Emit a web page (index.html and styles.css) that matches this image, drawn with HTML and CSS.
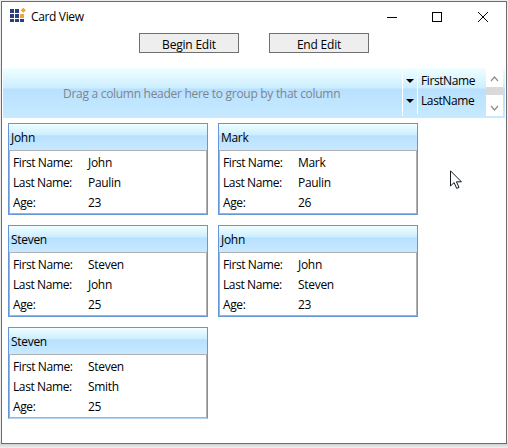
FILE: index.html
```
<!DOCTYPE html>
<html lang="en">
<head>
<meta charset="utf-8">
<title>Card View</title>
<link rel="stylesheet" href="styles.css">
</head>
<body>
<div class="window">
  <header class="titlebar">
    <svg class="logo" width="17" height="15" viewBox="0 0 17 15">
      <g fill="#293f7d"><path d="M0 1h4v4H0zM5 1h4v4H5zM0 6h4v4H0zM5 6h4v4H5zM0 11h4v3H0zM5 11h4v3H5zM10 11h4v3h-4z"/></g>
      <path fill="#f7a03c" d="M10 6h4v4h-4zM13.300 -.3l2.700 2.500-2.700 2.600-2.600-2.600z"/>
    </svg>
    <span class="title">Card View</span>
    <svg class="controls" width="104" height="12" viewBox="0 0 104 12" fill="none" stroke="#000">
      <path d="M0 6.500h10M45.500 1.500h9v9h-9z" shape-rendering="crispEdges"/>
      <path d="M91 1l10 10M101 1l-10 10"/>
    </svg>
  </header>
  <div class="toolbar">
    <button class="btn">Begin Edit</button>
    <button class="btn">End Edit</button>
  </div>
  <section class="groupbar">
    <div class="hint">Drag a column header here to group by that column</div>
    <div class="fields">
      <div class="field"><i class="drop"><b></b></i><span>FirstName</span></div>
      <div class="field"><i class="drop"><b></b></i><span>LastName</span></div>
    </div>
    <div class="scroll">
      <svg width="17" height="48" viewBox="0 0 17 48">
        <path fill="#d9d9d9" d="M0 19h17v8H0z"/>
        <path fill="none" stroke="#8c8c8c" stroke-width="1.200" d="M5 13l3.500-4 3.500 4M5 38l3.500 4 3.500-4"/>
      </svg>
    </div>
  </section>
  <main class="cards">
    <article class="card"><h2>John</h2><dl><dt>First Name:</dt><dd>John</dd><dt>Last Name:</dt><dd>Paulin</dd><dt>Age:</dt><dd>23</dd></dl></article>
    <article class="card"><h2>Mark</h2><dl><dt>First Name:</dt><dd>Mark</dd><dt>Last Name:</dt><dd>Paulin</dd><dt>Age:</dt><dd>26</dd></dl></article>
    <article class="card"><h2>Steven</h2><dl><dt>First Name:</dt><dd>Steven</dd><dt>Last Name:</dt><dd>John</dd><dt>Age:</dt><dd>25</dd></dl></article>
    <article class="card"><h2>John</h2><dl><dt>First Name:</dt><dd>John</dd><dt>Last Name:</dt><dd>Steven</dd><dt>Age:</dt><dd>23</dd></dl></article>
    <article class="card soft"><h2>Steven</h2><dl><dt>First Name:</dt><dd>Steven</dd><dt>Last Name:</dt><dd>Smith</dd><dt>Age:</dt><dd>25</dd></dl></article>
  </main>
  <svg class="cursor" width="13" height="20" viewBox="0 0 13 20"><path d="M.5 .8v15.200l3.600-3.400 2.600 5.800 2.300-1-2.600-5.600h5z" fill="#fff" stroke="#101820"/></svg>
</div>
</body>
</html>
```
FILE: styles.css
```
* { box-sizing: border-box; }
body {
  margin: 0;
  padding: 1px;
  height: 448px;
  overflow: hidden;
  background: linear-gradient(#ececec, #ececec 440px, #d2d2d2 444px, #f0f0f0 448px);
  font: 12px/20px "Open Sans", "Noto Sans", sans-serif;
  letter-spacing: -0.3px;
  color: #000;
}
.window {
  position: relative;
  width: 506px;
  height: 443px;
  border: 1px solid #6b6d6c;
  background: #fff;
}
.titlebar {
  display: flex;
  align-items: center;
  height: 29px;
  padding: 0 15px 0 8px;
}
.logo { margin-top: -2px; overflow: visible; }
.title { margin-left: 4px; letter-spacing: -0.35px; }
.controls { margin-left: auto; }
.toolbar {
  display: flex;
  gap: 30px;
  height: 37px;
  padding: 2px 0 0 137px;
}
.btn {
  width: 100px;
  height: 20px;
  padding: 2px 0 0;
  border: 1px solid #707070;
  background: #eee;
  font: inherit;
  line-height: 18px;
  letter-spacing: -0.2px;
  color: #000;
}
.groupbar {
  display: flex;
  width: 502px;
  height: 50px;
  margin-left: 1px;
  background: linear-gradient(#f0ffff, #cceeff 40%, #b8e0ff 42%, #bde4ff 60%, #c6eaff);
}
.hint {
  flex: 1;
  padding: 16px 0 0 60px;
  color: #808589;
  letter-spacing: -0.29px;
  white-space: nowrap;
}
.fields {
  width: 84px;
  margin: 2px 0;
  padding-top: 1px;
  border-left: 1px solid #fff;
}
.field { display: flex; align-items: center; height: 20px; letter-spacing: -0.4px; }
.field + .field { height: 26px; padding-bottom: 6px; }
.drop {
  display: flex;
  justify-content: center;
  align-items: center;
  width: 15px;
  height: 26px;
  margin-right: 3px;
  border-right: 1px solid #fff;
}
.drop b {
  border: 4px solid transparent;
  border-top-color: #000;
  border-bottom: 0;
}
.scroll { width: 17px; height: 48px; margin-right: 2px; background: #fff; }
.scroll svg { display: block; }
.cards {
  display: grid;
  grid-template-columns: 200px 200px;
  grid-auto-rows: 92px;
  gap: 10px;
  padding: 5px 6px;
}
.card {
  border: 1px solid #6596d8;
  background: linear-gradient(#f0ffff, #cceeff 40%, #b8e0ff 44%, #c8eaff) 0 0 / 100% 27px no-repeat, #b9d7f7;
}
.card.soft { border-bottom-color: #b7d3f4; }
.card h2 {
  height: 26px;
  margin: 0;
  padding: 4px 0 0 2px;
  font: inherit;
}
.card dl {
  display: grid;
  grid-template-columns: 75px 1fr;
  grid-auto-rows: 20px;
  height: 64px;
  margin: 0;
  padding: 2px 0 0 3px;
  border: 1px solid #aeb0b3;
  background: #fff;
}
.card dt, .card dd { margin: 0; white-space: nowrap; }
.card dt { letter-spacing: -0.4px; }
.cursor { position: absolute; left: 448px; top: 168px; }
```
